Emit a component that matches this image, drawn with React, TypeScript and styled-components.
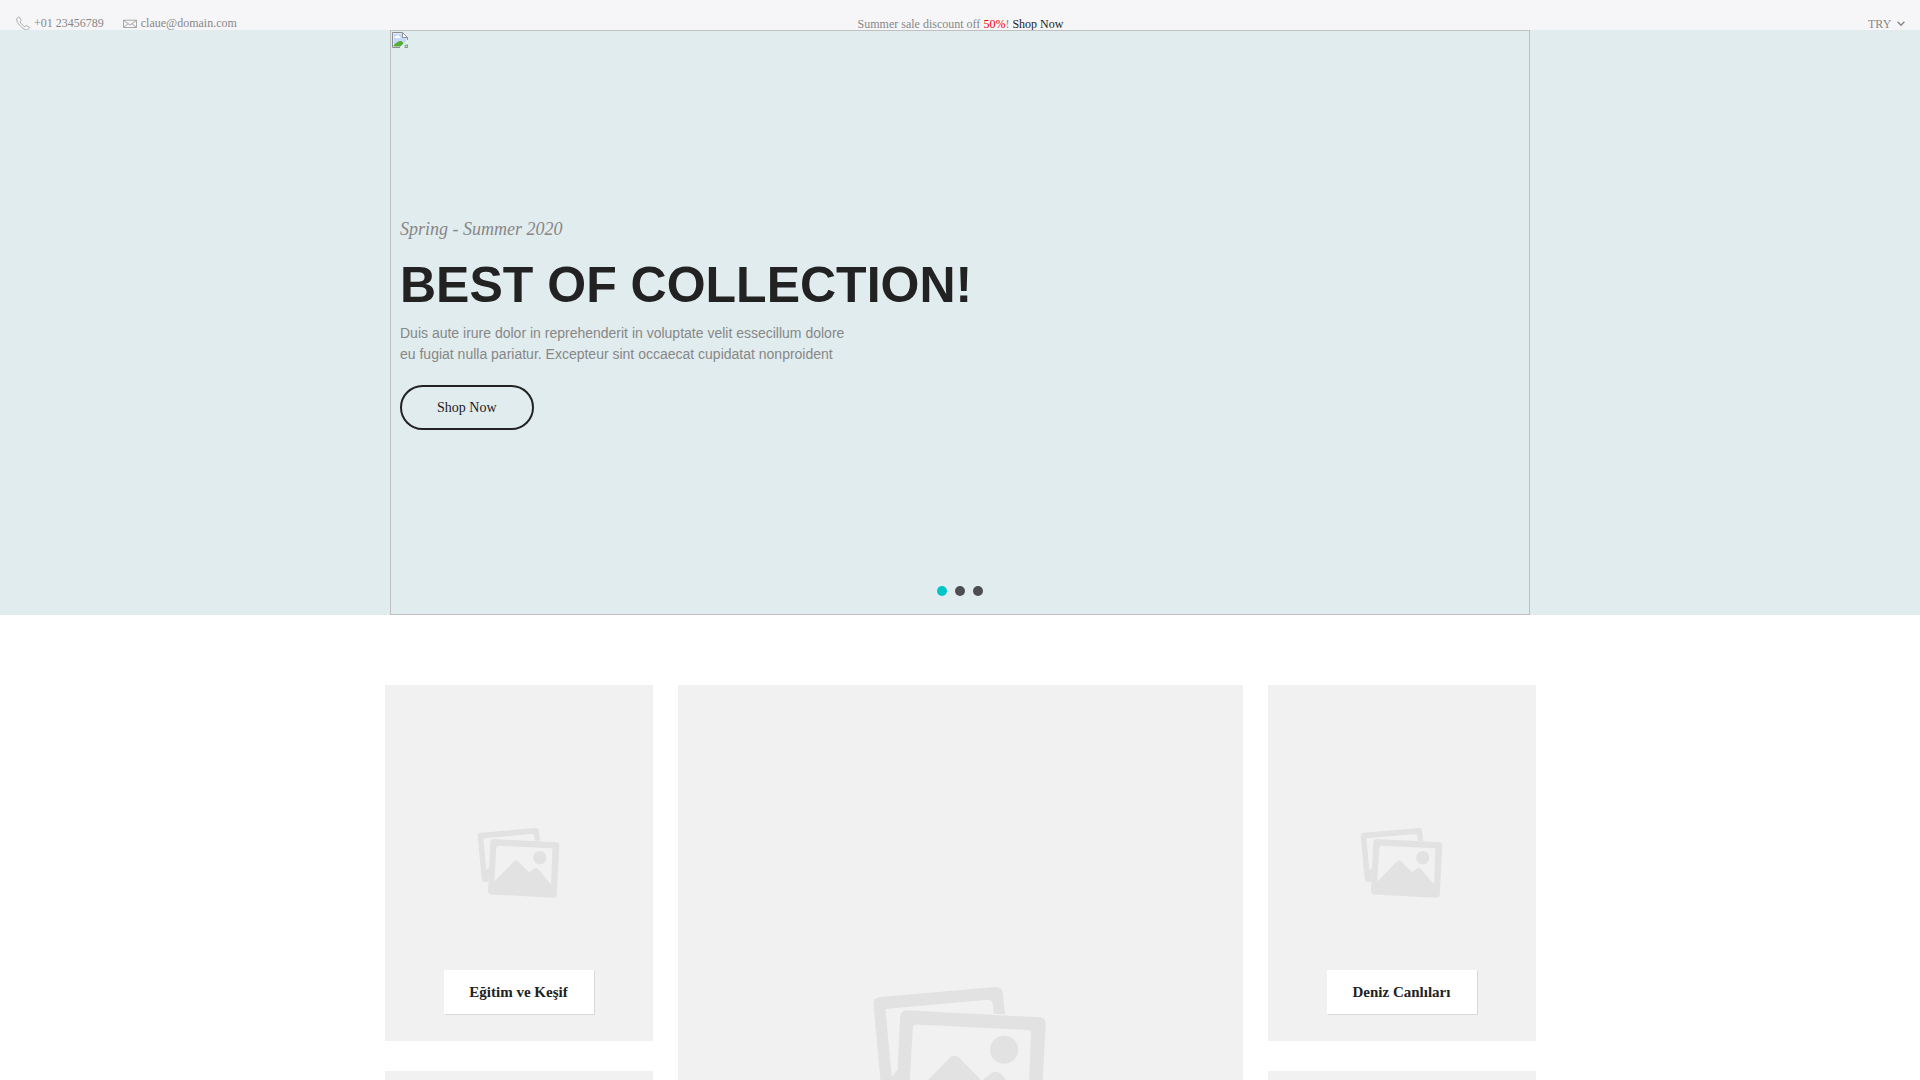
import React, { useState } from "react";
import styled, { createGlobalStyle } from "styled-components";

const serif = `"Liberation Serif", "Times New Roman", serif`;
const sans = `"Liberation Sans", Arial, sans-serif`;

const GlobalStyle = createGlobalStyle`
  *, *::before, *::after { box-sizing: border-box; }
  body {
    margin: 0;
    background: #fff;
    color: #878787;
    font-family: ${serif};
    font-size: 14px;
  }
  a { color: inherit; text-decoration: none; }
`;

const TopBar = styled.header`
  display: grid;
  grid-template-columns: 1fr auto 1fr;
  height: 30px;
  padding: 16px 15px 0 16px;
  overflow: hidden;
  background: #f6f6f8;
  font-size: 12px;
  line-height: 16px;
`;

const Contacts = styled.address`
  display: flex;
  align-items: flex-start;
  gap: 19px;
  font-style: normal;
  line-height: 14px;
`;

const Contact = styled.a`
  display: flex;
  gap: 4px;

  svg {
    display: block;
    width: 14px;
    height: 14px;
  }
`;

const Promo = styled.p`
  margin: 0;
`;

const Discount = styled.span`
  color: #f00000;
`;

const PromoLink = styled.a`
  && { color: #222; }
`;

const Currency = styled.label`
  position: relative;
  justify-self: end;
  height: 16px;

  svg {
    position: absolute;
    top: 4px;
    right: 0;
    width: 8px;
    height: 8px;
    pointer-events: none;
  }
`;

const CurrencySelect = styled.select`
  display: block;
  appearance: none;
  height: 16px;
  margin: 0;
  padding: 0 13px 0 0;
  border: 0;
  background: transparent;
  color: inherit;
  font: inherit;
`;

const Hero = styled.section`
  background: #e1ecee;
`;

const Slide = styled.div`
  position: relative;
  display: flex;
  align-items: center;
  max-width: 1140px;
  min-height: 585px;
  margin: 0 auto;
  padding-top: 2px;
  border: 1px solid #c0c0c0;
`;

const MissingImage = styled.svg`
  position: absolute;
  top: 1px;
  left: 1px;
  width: 16px;
  height: 16px;
`;

const SlideText = styled.div`
  padding: 0 9px;
`;

const Season = styled.p`
  margin: 0 0 14px;
  font-size: 18px;
  font-style: italic;
  line-height: 24px;
`;

const Title = styled.h1`
  margin: 0 0 8px;
  color: #222;
  font-family: ${sans};
  font-size: 50px;
  line-height: 60px;
`;

const Lead = styled.p`
  max-width: 460px;
  margin: 0 0 20px;
  font-family: ${sans};
  font-size: 14px;
  line-height: 21px;
`;

const ShopButton = styled.button`
  height: 45px;
  padding: 0 35px;
  border: 2px solid #222;
  border-radius: 23px;
  background: transparent;
  color: #222;
  font: 14px ${serif};
  cursor: pointer;
`;

const Dots = styled.div`
  position: absolute;
  right: 0;
  bottom: 18px;
  left: 0;
  display: flex;
  justify-content: center;
  gap: 8px;
`;

const Dot = styled.button<{ $active: boolean }>`
  width: 10px;
  height: 10px;
  padding: 0;
  border: 0;
  border-radius: 50%;
  background: ${(p) => (p.$active ? "#00c4c8" : "#4c4e4f")};
  cursor: pointer;
`;

const Collections = styled.main`
  display: grid;
  grid-template-columns: 268fr 565fr 268fr;
  gap: 25px;
  max-width: 1151px;
  margin: 70px auto 60px;
`;

const Column = styled.div`
  display: flex;
  flex-direction: column;
  gap: 30px;
`;

const Card = styled.a`
  position: relative;
  display: flex;
  align-items: center;
  justify-content: center;
  aspect-ratio: 268 / 356;
  background: #f1f1f1;

  > svg {
    display: block;
    width: 31%;
  }
`;

const CardLabel = styled.span`
  position: absolute;
  bottom: 27px;
  min-width: 150px;
  padding: 0 25px;
  background: #fff;
  box-shadow: 1px 1px 0 rgba(0, 0, 0, 0.1);
  color: #222;
  font-size: 15px;
  font-weight: 700;
  line-height: 44px;
  text-align: center;
  white-space: nowrap;
`;

const PhoneIcon = () => (
  <svg viewBox="0 0 14 14" fill="none" stroke="#8e8e8e" strokeWidth=".7" aria-hidden="true">
    <path d="M2.2 1.1 1 2.3C-.1 4.2 2.3 8 4.4 10.1 6.6 12.3 9.7 14.6 11.6 13.8L13.3 12.3C13.7 11.9 13.5 11.5 13.1 11.2L10.9 9.7C10.4 9.4 10 9.6 9.6 10L8.9 10.7C8.3 11 4.2 7 4.1 5.9L4.8 5.1C5.2 4.7 5.3 4.3 5 3.9L3.5 1.4C3.2.8 2.7.7 2.2 1.1Z" />
  </svg>
);

const MailIcon = () => (
  <svg viewBox="0 0 14 14" fill="none" stroke="#878787" strokeWidth=".7" aria-hidden="true">
    <path d="M.5 4.2h13v7.3H.5ZM.8 4.5 7 9l6.2-4.5M.8 11.2l4.4-3.5M13.2 11.2 8.8 7.7" />
  </svg>
);

const BrokenImageIcon = () => (
  <MissingImage viewBox="0 0 16 16" role="img" aria-label="Slide">
    <path d="M.5.5h10l5 5v10H.5Z" fill="#fff" />
    <path d="M1.5 1.5h8.500v4h4.500v9h-13Z" fill="#c5d8f8" />
    <path d="M2.5 6c0-1.600 1-2 1.800-1.800C5 2.800 7 3 7.300 4.500 8.300 4.500 8.500 5.500 8.500 6Z" fill="#fff" />
    <path d="M1.5 14.5v-1C4 10.5 6.5 9 8.5 9s2.500 1.500 3 2.500L8.500 14.500Z" fill="#55ad33" />
    <path d="m12 14.5 2.500-2.500v2.500Z" fill="#55ad33" />
    <path d="m8.8 15.8 7-7" stroke="#e1ecee" strokeWidth="2" />
    <path d="M8 15.5H.5V.5h10l5 5V8M10.500.5v5h5M12.500 15.500h3V12.500" fill="none" stroke="#8b8e92" />
  </MissingImage>
);

const PicturesIcon = () => (
  <svg viewBox="-2 -3 249 213" fill="#e2e2e2" aria-hidden="true">
    <path d="M0 24Q0 15 9 14L174 0Q183 0 184 9L187 39 171 38 170 25Q169 18 162 18L17 31 26 127 35 117 32 162H22Q13 162 12 153Z" />
    <path
      fillRule="evenodd"
      d="M38 42Q39 33 48 33L236 43Q245 44 245 53L237 200Q236 209 227 209L40 199Q31 198 31 189ZM61 53Q57 53 56 58L50 160 108 101Q115 94 123 101L154 133 168 122Q174 118 181 123L220 169 224 65Q224 61 220 61Z"
    />
    <circle cx="186" cy="89" r="20" />
  </svg>
);

interface CollectionProps {
  label?: string;
}

const Collection = ({ label }: CollectionProps) => (
  <Card href="#" aria-label={label ?? "Collection"}>
    <PicturesIcon />
    {label && <CardLabel>{label}</CardLabel>}
  </Card>
);

export default function App() {
  const [slide, setSlide] = useState(0);

  return (
    <>
      <GlobalStyle />
      <TopBar>
        <Contacts>
          <Contact href="tel:+0123456789">
            <PhoneIcon />
            +01 23456789
          </Contact>
          <Contact href="mailto:claue@domain.com">
            <MailIcon />
            claue@domain.com
          </Contact>
        </Contacts>
        <Promo>
          Summer sale discount off <Discount>50%</Discount>! <PromoLink href="#">Shop Now</PromoLink>
        </Promo>
        <Currency>
          <CurrencySelect aria-label="Currency">
            <option>TRY</option>
          </CurrencySelect>
          <svg viewBox="0 0 8 8" fill="none" stroke="#878787" strokeWidth="1.4" aria-hidden="true">
            <path d="m.6 1.8 3.4 3.4 3.4-3.4" />
          </svg>
        </Currency>
      </TopBar>

      <Hero>
        <Slide>
          <BrokenImageIcon />
          <SlideText>
            <Season>Spring - Summer 2020</Season>
            <Title>BEST OF COLLECTION!</Title>
            <Lead>
              Duis aute irure dolor in reprehenderit in voluptate velit essecillum dolore eu fugiat nulla
              pariatur. Excepteur sint occaecat cupidatat nonproident
            </Lead>
            <ShopButton type="button">Shop Now</ShopButton>
          </SlideText>
          <Dots>
            {[0, 1, 2].map((n) => (
              <Dot
                key={n}
                type="button"
                $active={n === slide}
                aria-label={`Slide ${n + 1}`}
                onClick={() => setSlide(n)}
              />
            ))}
          </Dots>
        </Slide>
      </Hero>

      <Collections>
        <Column>
          <Collection label="Eğitim ve Keşif" />
          <Collection />
        </Column>
        <Column>
          <Collection />
        </Column>
        <Column>
          <Collection label="Deniz Canlıları" />
          <Collection />
        </Column>
      </Collections>
    </>
  );
}
